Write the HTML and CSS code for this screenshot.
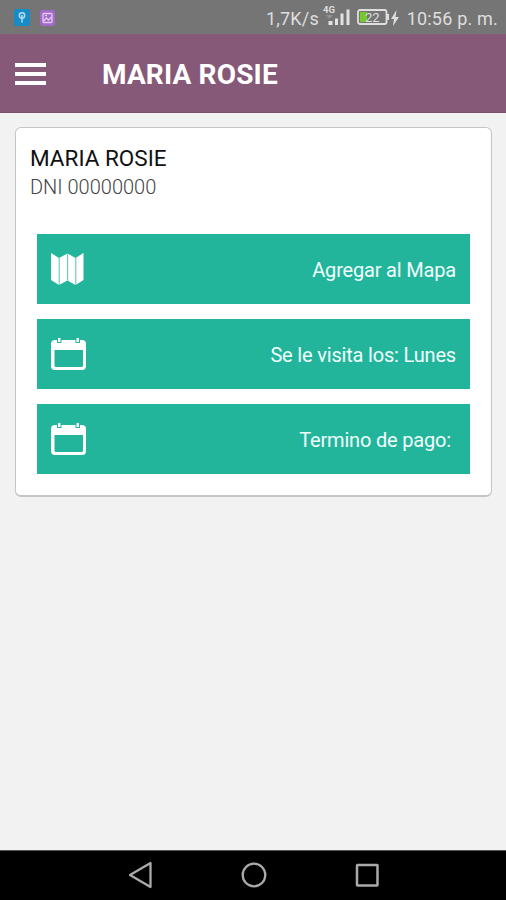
FILE: index.html
```html
<!DOCTYPE html>
<html lang="es">
<head>
<meta charset="utf-8">
<title>Maria Rosie</title>
<link rel="stylesheet" href="styles.css">
</head>
<body>
<div class="status">
  <div class="notices">
    <svg width="16" height="17" viewBox="0 0 16 17"><rect width="16" height="17" rx="2" fill="#168bc6"/><circle cx="8" cy="6.500" r="2.700" fill="none" stroke="#b5dbef" stroke-width="1.500"/><path d="M8 6v7.500" stroke="#b5dbef" stroke-width="1.500"/></svg>
    <svg width="15" height="16" viewBox="0 0 15 16"><rect width="15" height="16" rx="3" fill="#a569cc"/><rect x="3" y="3.500" width="9" height="9" rx="1" fill="none" stroke="#e4cdf0" stroke-width="1.300"/><path d="M3.500 11l3-3 2 2 3-3M5 5.700h2" fill="none" stroke="#e4cdf0" stroke-width="1.300"/></svg>
  </div>
  <span class="speed">1,7K/s</span>
  <div class="signal">
    <span class="network">4G</span>
    <svg width="28" height="22" viewBox="0 0 28 22"><path d="M4 10h7l-3.500 4z" fill="#929292"/><path d="M6.500 16h4v4h-4zM13 13.500h3V20h-3zM18.500 8.500h3V20h-3zM24.500 4.500h3V20h-3z" fill="#e2e2e2"/></svg>
  </div>
  <div class="battery">
    <svg width="34" height="18" viewBox="0 0 34 18"><rect x="1" y="2" width="28.500" height="14" rx="2" fill="none" stroke="#dedede" stroke-width="1.800"/><path d="M3 4h7v10H3z" fill="#76c92b"/><path d="M30 6h2v6h-2z" fill="#dedede"/></svg>
    <span class="level">22</span>
  </div>
  <svg class="bolt" width="8" height="18" viewBox="0 0 8 18"><path d="M5.500 1L0 10h3L2 17l6-9H4.600z" fill="#dedede"/></svg>
  <span class="time">10:56 p. m.</span>
</div>
<header class="bar">
  <div class="menu"><i></i><i></i><i></i></div>
  <h1>MARIA ROSIE</h1>
</header>
<main>
  <section class="card">
    <h2>MARIA ROSIE</h2>
    <p class="dni">DNI 00000000</p>
    <div class="actions">
      <div class="action">
        <svg width="36" height="34" viewBox="0 0 36 34"><path d="M0 1l8 5 8.500-4.500L24.500 6l8-5v27l-8 5-8-4.500L8 33l-8-5z" fill="#fff"/><path d="M8.200 6v27M16.600 2v27M24.800 6v27" stroke="#62cab8" stroke-width="1.100"/></svg>
        <span>Agregar al Mapa</span>
      </div>
      <div class="action">
        <svg width="36" height="34" viewBox="0 0 36 34"><path fill-rule="evenodd" d="M4 3h27a4 4 0 0 1 4 4v22a4 4 0 0 1-4 4H4a4 4 0 0 1-4-4V7a4 4 0 0 1 4-4zM3.500 13v15.500q0 1.500 1.500 1.500h25.500q1.500 0 1.500-1.500V13z" fill="#fff"/><path d="M6 2.500h4.500V6H6zM24.500 2.500H29V6h-4.500z" fill="#23b59b"/><path d="M7 1h2.500v4H7zM25.500 1H28v4h-2.500z" fill="#fff"/></svg>
        <span>Se le visita los: Lunes</span>
      </div>
      <div class="action">
        <svg width="36" height="34" viewBox="0 0 36 34"><path fill-rule="evenodd" d="M4 3h27a4 4 0 0 1 4 4v22a4 4 0 0 1-4 4H4a4 4 0 0 1-4-4V7a4 4 0 0 1 4-4zM3.500 13v15.500q0 1.500 1.500 1.500h25.500q1.500 0 1.500-1.500V13z" fill="#fff"/><path d="M6 2.500h4.500V6H6zM24.500 2.500H29V6h-4.500z" fill="#23b59b"/><path d="M7 1h2.500v4H7zM25.500 1H28v4h-2.500z" fill="#fff"/></svg>
        <span class="open">Termino de pago:</span>
      </div>
    </div>
  </section>
</main>
<nav class="system">
  <svg width="26" height="28" viewBox="0 0 26 28"><path d="M2 14L22.500 2v24z" fill="none" stroke="#aaa" stroke-width="2.300" stroke-linejoin="round"/></svg>
  <svg width="26" height="28" viewBox="0 0 26 28"><circle cx="13" cy="14" r="11.300" fill="none" stroke="#aaa" stroke-width="2.300"/></svg>
  <svg width="26" height="28" viewBox="0 0 26 28"><rect x="3" y="4" width="20.500" height="20.500" rx=".5" fill="none" stroke="#aaa" stroke-width="2.500"/></svg>
</nav>
</body>
</html>
```
FILE: styles.css
```css
* { box-sizing: border-box; }
body {
  margin: 0;
  height: 900px;
  display: flex;
  flex-direction: column;
  background: #f2f2f2;
  font-family: Roboto, sans-serif;
  overflow: hidden;
}
svg { display: block; flex: none; }
h1, h2, p { margin: 0; }
.status {
  height: 34px;
  flex: none;
  display: flex;
  align-items: center;
  padding: 1px 8px 0 14px;
  background: #757575;
  color: #dedede;
  font-size: 18px;
  white-space: nowrap;
}
.notices { display: flex; gap: 10px; align-items: center; width: 252px; }
.speed { width: 56px; letter-spacing: .2px; padding-top: 1px; }
.signal { position: relative; width: 35px; margin-top: -4px; }
.network {
  position: absolute;
  left: 1px;
  top: 0;
  font-size: 9.500px;
  line-height: 10px;
  font-weight: 700;
}
.battery { position: relative; width: 34px; margin-top: -1px; }
.level {
  position: absolute;
  left: 8px;
  top: 3px;
  font-size: 13px;
  line-height: 13px;
}
.time { margin-left: auto; letter-spacing: .2px; padding-top: 1px; }
.bar {
  height: 79px;
  flex: none;
  display: flex;
  align-items: center;
  padding-left: 15px;
  border-bottom: 1px solid #77506b;
  background: #875979;
  color: #fff;
}
.menu { width: 87px; display: grid; gap: 5px; padding-top: 1px; }
.menu i { display: block; width: 31px; height: 4px; background: #fff; }
h1 { font-size: 28px; line-height: 32px; font-weight: 700; letter-spacing: .15px; padding-top: 3px; }
main { flex: 1; padding: 14px 14px 0 15px; }
.card {
  height: 370px;
  border: 1px solid #c3c5c6;
  border-bottom-width: 2px;
  border-radius: 6px;
  background: #fff;
  padding: 16px 21px 0;
}
h2 { margin-left: -7px; font-size: 22.500px; line-height: 28px; font-weight: 400; color: #111; }
.dni { margin-left: -7px; font-size: 20px; line-height: 28px; font-weight: 300; color: #444; padding-top: 1px; }
.actions { display: grid; gap: 15px; margin-top: 32.500px; }
.action {
  height: 70px;
  display: flex;
  align-items: center;
  justify-content: space-between;
  padding: 2px 14px 0;
  background: #23b59b;
  color: #f0fffb;
  font-size: 20px;
  letter-spacing: -.18px;
}
.action svg { margin-top: -2px; }
.open { padding-right: 5px; }
.system {
  height: 50px;
  flex: none;
  display: flex;
  align-items: center;
  justify-content: center;
  gap: 87px;
  border-top: 1px solid #555;
  padding: 0 0 2px 1px;
  background: #000;
}
```
